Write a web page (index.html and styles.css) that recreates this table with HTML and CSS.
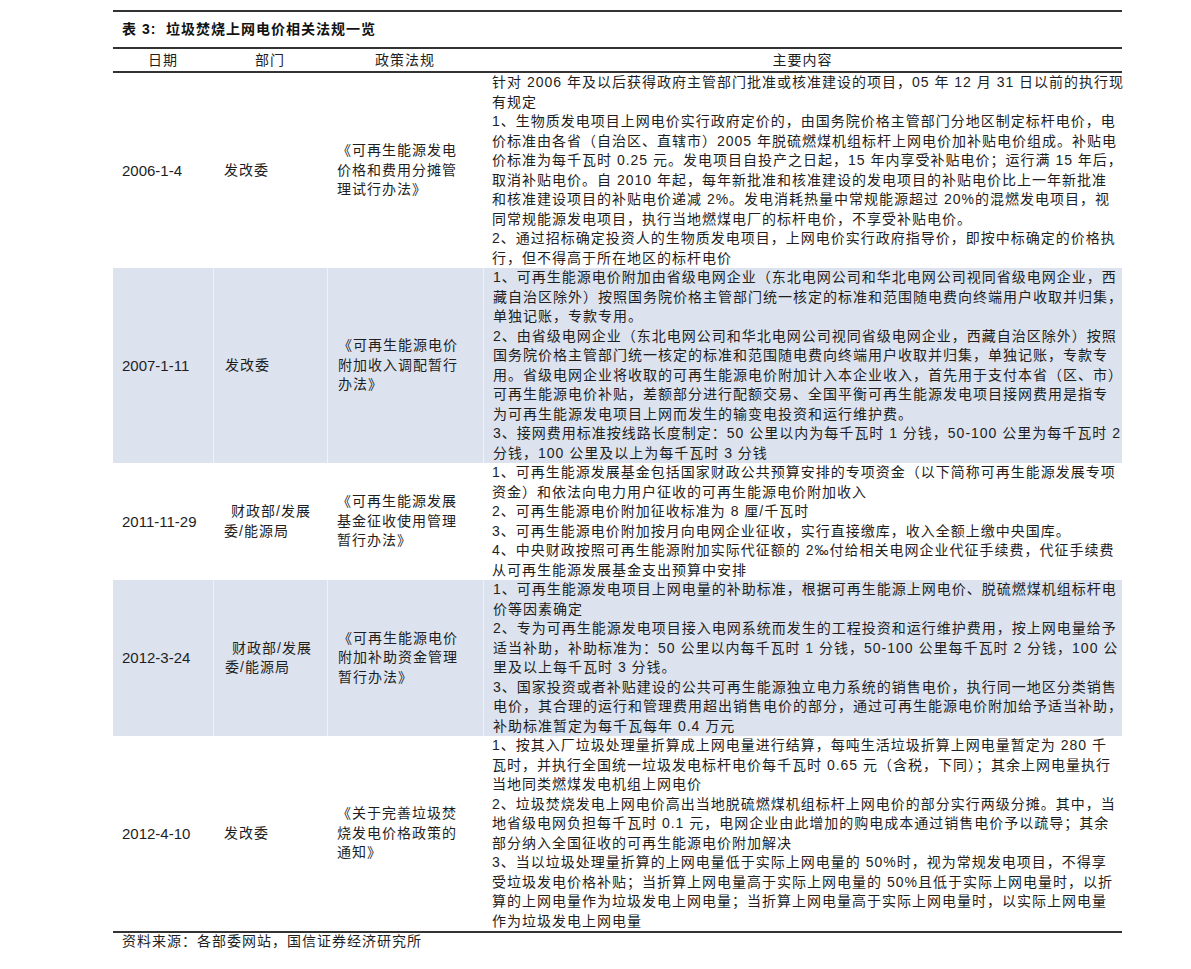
FILE: index.html
```html
<!DOCTYPE html>
<html lang="zh-CN">
<head>
<meta charset="utf-8">
<title>垃圾焚烧上网电价相关法规一览</title>
<link rel="stylesheet" href="styles.css">
</head>
<body>
<div class="page">
  <div class="title">表 3:&nbsp; 垃圾焚烧上网电价相关法规一览</div>
  <div class="table">
    <div class="row head">
      <div class="hcell">日期</div>
      <div class="hcell">部门</div>
      <div class="hcell">政策法规</div>
      <div class="hcell">主要内容</div>
    </div>

    <div class="row">
      <div class="cell date">2006-1-4</div>
      <div class="cell dept"><div>发改委</div></div>
      <div class="cell law"><div>《可再生能源发电</div><div>价格和费用分摊管</div><div>理试行办法》</div></div>
      <div class="cell content">
        <div>针对 2006 年及以后获得政府主管部门批准或核准建设的项目，05 年 12 月 31 日以前的执行现</div>
        <div>有规定</div>
        <div>1、生物质发电项目上网电价实行政府定价的，由国务院价格主管部门分地区制定标杆电价，电</div>
        <div>价标准由各省（自治区、直辖市）2005 年脱硫燃煤机组标杆上网电价加补贴电价组成。补贴电</div>
        <div>价标准为每千瓦时 0.25 元。发电项目自投产之日起，15 年内享受补贴电价；运行满 15 年后，</div>
        <div>取消补贴电价。自 2010 年起，每年新批准和核准建设的发电项目的补贴电价比上一年新批准</div>
        <div>和核准建设项目的补贴电价递减 2%。发电消耗热量中常规能源超过 20%的混燃发电项目，视</div>
        <div>同常规能源发电项目，执行当地燃煤电厂的标杆电价，不享受补贴电价。</div>
        <div>2、通过招标确定投资人的生物质发电项目，上网电价实行政府指导价，即按中标确定的价格执</div>
        <div>行，但不得高于所在地区的标杆电价</div>
      </div>
    </div>

    <div class="row shaded">
      <div class="cell date">2007-1-11</div>
      <div class="cell dept"><div>发改委</div></div>
      <div class="cell law"><div>《可再生能源电价</div><div>附加收入调配暂行</div><div>办法》</div></div>
      <div class="cell content">
        <div>1、可再生能源电价附加由省级电网企业（东北电网公司和华北电网公司视同省级电网企业，西</div>
        <div>藏自治区除外）按照国务院价格主管部门统一核定的标准和范围随电费向终端用户收取并归集，</div>
        <div>单独记账，专款专用。</div>
        <div>2、由省级电网企业（东北电网公司和华北电网公司视同省级电网企业，西藏自治区除外）按照</div>
        <div>国务院价格主管部门统一核定的标准和范围随电费向终端用户收取并归集，单独记账，专款专</div>
        <div>用。省级电网企业将收取的可再生能源电价附加计入本企业收入，首先用于支付本省（区、市）</div>
        <div>可再生能源电价补贴，差额部分进行配额交易、全国平衡可再生能源发电项目接网费用是指专</div>
        <div>为可再生能源发电项目上网而发生的输变电投资和运行维护费。</div>
        <div>3、接网费用标准按线路长度制定：50 公里以内为每千瓦时 1 分钱，50-100 公里为每千瓦时 2</div>
        <div>分钱，100 公里及以上为每千瓦时 3 分钱</div>
      </div>
    </div>

    <div class="row">
      <div class="cell date">2011-11-29</div>
      <div class="cell dept"><div class="indent">财政部/发展</div><div>委/能源局</div></div>
      <div class="cell law"><div>《可再生能源发展</div><div>基金征收使用管理</div><div>暂行办法》</div></div>
      <div class="cell content">
        <div>1、可再生能源发展基金包括国家财政公共预算安排的专项资金（以下简称可再生能源发展专项</div>
        <div>资金）和依法向电力用户征收的可再生能源电价附加收入</div>
        <div>2、可再生能源电价附加征收标准为 8 厘/千瓦时</div>
        <div>3、可再生能源电价附加按月向电网企业征收，实行直接缴库，收入全额上缴中央国库。</div>
        <div>4、中央财政按照可再生能源附加实际代征额的 2‰付给相关电网企业代征手续费，代征手续费</div>
        <div>从可再生能源发展基金支出预算中安排</div>
      </div>
    </div>

    <div class="row shaded">
      <div class="cell date">2012-3-24</div>
      <div class="cell dept"><div class="indent">财政部/发展</div><div>委/能源局</div></div>
      <div class="cell law"><div>《可再生能源电价</div><div>附加补助资金管理</div><div>暂行办法》</div></div>
      <div class="cell content">
        <div>1、可再生能源发电项目上网电量的补助标准，根据可再生能源上网电价、脱硫燃煤机组标杆电</div>
        <div>价等因素确定</div>
        <div>2、专为可再生能源发电项目接入电网系统而发生的工程投资和运行维护费用，按上网电量给予</div>
        <div>适当补助，补助标准为：50 公里以内每千瓦时 1 分钱，50-100 公里每千瓦时 2 分钱，100 公</div>
        <div>里及以上每千瓦时 3 分钱。</div>
        <div>3、国家投资或者补贴建设的公共可再生能源独立电力系统的销售电价，执行同一地区分类销售</div>
        <div>电价，其合理的运行和管理费用超出销售电价的部分，通过可再生能源电价附加给予适当补助，</div>
        <div>补助标准暂定为每千瓦每年 0.4 万元</div>
      </div>
    </div>

    <div class="row">
      <div class="cell date">2012-4-10</div>
      <div class="cell dept"><div>发改委</div></div>
      <div class="cell law"><div>《关于完善垃圾焚</div><div>烧发电价格政策的</div><div>通知》</div></div>
      <div class="cell content">
        <div>1、按其入厂垃圾处理量折算成上网电量进行结算，每吨生活垃圾折算上网电量暂定为 280 千</div>
        <div>瓦时，并执行全国统一垃圾发电标杆电价每千瓦时 0.65 元（含税，下同）；其余上网电量执行</div>
        <div>当地同类燃煤发电机组上网电价</div>
        <div>2、垃圾焚烧发电上网电价高出当地脱硫燃煤机组标杆上网电价的部分实行两级分摊。其中，当</div>
        <div>地省级电网负担每千瓦时 0.1 元，电网企业由此增加的购电成本通过销售电价予以疏导；其余</div>
        <div>部分纳入全国征收的可再生能源电价附加解决</div>
        <div>3、当以垃圾处理量折算的上网电量低于实际上网电量的 50%时，视为常规发电项目，不得享</div>
        <div>受垃圾发电价格补贴；当折算上网电量高于实际上网电量的 50%且低于实际上网电量时，以折</div>
        <div>算的上网电量作为垃圾发电上网电量；当折算上网电量高于实际上网电量时，以实际上网电量</div>
        <div>作为垃圾发电上网电量</div>
      </div>
    </div>
  </div>
  <div class="source">资料来源：各部委网站，国信证券经济研究所</div>
</div>
</body>
</html>
```

FILE: styles.css
```css
html, body {
  margin: 0;
  padding: 0;
  background: #ffffff;
}

body {
  font-family: "Liberation Sans", "Noto Sans CJK SC", sans-serif;
  color: #1e1e1e;
  font-size: 14px;
  letter-spacing: 1px;
}

.page {
  margin-left: 113px;
  width: 1009px;
  padding-top: 10px;
}

.title {
  border-top: 2px solid #333;
  border-bottom: 2px solid #333;
  height: 35px;
  line-height: 35px;
  padding-left: 9px;
  font-weight: bold;
  font-size: 14px;
  color: #111;
}

.table {
  border-bottom: 2px solid #333;
}

.row {
  display: grid;
  grid-template-columns: 100px 114px 156px 1fr;
  line-height: 19.5px;
}

.row.head {
  height: 22px;
  line-height: 22px;
  border-bottom: 2px solid #333;
}

.hcell {
  text-align: center;
}

.row.shaded {
  background: #dce3ef;
}

.cell {
  display: flex;
  flex-direction: column;
  justify-content: center;
  white-space: nowrap;
}

.row.shaded .cell + .cell {
  border-left: 1px solid rgba(255, 255, 255, 0.55);
}

.date {
  padding-left: 9px;
  font-size: 15px;
  letter-spacing: 0;
}

.dept {
  padding-left: 11px;
}

.dept .indent {
  padding-left: 7px;
}

.law {
  padding-left: 10px;
}

.content {
  padding-left: 9px;
}

.source {
  padding-left: 9px;
  line-height: 16px;
  font-size: 14px;
}
```
